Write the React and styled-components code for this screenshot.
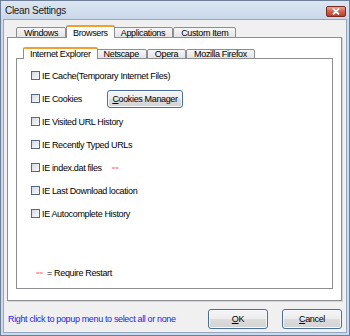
import React from 'react';
import styled, { createGlobalStyle } from 'styled-components';

const GlobalStyle = createGlobalStyle`
  html, body {
    margin: 0;
    padding: 0;
    background: #ffffff;
  }
  body {
    font-family: "Liberation Sans", Arial, sans-serif;
    font-size: 9px;
    letter-spacing: -0.35px;
    color: #000;
  }
`;

const Window = styled.div`
  width: 350px;
  height: 336px;
  box-sizing: border-box;
  display: flex;
  flex-direction: column;
  border: 1px solid #6c7f96;
  background: #cad9eb;
  padding: 0 2px 2px;
`;

const TitleBar = styled.div`
  height: 18px;
  display: flex;
  align-items: center;
  justify-content: space-between;
  background: linear-gradient(#dce6f2, #c9d8ea);
  margin: 0 -2px;
  padding: 0 3px 0 4px;
`;

const Title = styled.span`
  font-size: 10px;
  letter-spacing: -0.3px;
  color: #1a1a1a;
`;

const CloseButton = styled.div`
  width: 20px;
  height: 11px;
  box-sizing: border-box;
  margin-top: 2px;
  border: 1px solid #7a2a22;
  border-radius: 2px;
  background: linear-gradient(#e9a392, #d0614c 50%, #b8402c);
  display: flex;
  align-items: center;
  justify-content: center;
`;

const Body = styled.div`
  flex: 1;
  display: flex;
  flex-direction: column;
  background: #f0f0f0;
  border: 1px solid #93a7c0;
  padding: 4px 4px 3px 3px;
`;

const TabStrip = styled.div`
  display: flex;
  align-items: flex-end;
  padding-left: ${(p) => p.$indent}px;
  height: ${(p) => p.$height}px;
  position: relative;
  z-index: 1;
`;

const Tab = styled.div`
  box-sizing: border-box;
  height: ${(p) => (p.$active ? p.$h + 2 : p.$h)}px;
  padding: 0 ${(p) => (p.$active ? 6 : 7)}px;
  margin: 0 ${(p) => (p.$active ? -2 : 0)}px -1px;
  display: flex;
  align-items: center;
  white-space: nowrap;
  border: 1px solid #8c8e94;
  border-bottom: ${(p) => (p.$active ? 'none' : '1px solid #8c8e94')};
  border-top: ${(p) => (p.$active ? '2px solid #f0a030' : '1px solid #8c8e94')};
  border-radius: 2px 2px 0 0;
  background: ${(p) => (p.$active ? '#ffffff' : 'linear-gradient(#f7f7f7, #e4e4e4)')};
  position: relative;
  z-index: ${(p) => (p.$active ? 2 : 1)};
  & + & {
    margin-left: ${(p) => (p.$active ? -2 : 0)}px;
  }
`;

const Panel = styled.div`
  flex: 1;
  display: flex;
  flex-direction: column;
  background: #ffffff;
  border: 1px solid #8c8e94;
  box-shadow: ${(p) => (p.$outer ? '1px 1px 0 #d6d6d6' : 'none')};
  padding: ${(p) => p.$pad};
`;

const OptionList = styled.div`
  display: flex;
  flex-direction: column;
  padding: 5px 0 0 14px;
`;

const OptionRow = styled.label`
  height: 23px;
  display: flex;
  align-items: center;
  gap: 2px;
  white-space: nowrap;
`;

const CheckBox = styled.span`
  width: 9px;
  height: 9px;
  box-sizing: border-box;
  border: 1px solid #55698a;
  background: linear-gradient(135deg, #d5d9e0, #fafafa);
  flex: none;
`;

const RestartMark = styled.span`
  color: #ff5a5a;
  font-size: 6px;
  font-weight: bold;
  letter-spacing: 0;
  margin-left: ${(p) => p.$gap}px;
  margin-right: ${(p) => p.$after || 0}px;
`;

const Button = styled.button`
  font-family: inherit;
  font-size: 9px;
  letter-spacing: -0.35px;
  color: #000;
  box-sizing: border-box;
  width: ${(p) => p.$width}px;
  height: ${(p) => p.$height}px;
  margin-left: ${(p) => p.$offset || 0}px;
  padding: 0;
  white-space: nowrap;
  border: 1px solid #4a6f98;
  border-radius: 3px;
  background: linear-gradient(#f6f6f6, #ececec 50%, #dcdcdc 51%, #d3d3d3);
  box-shadow: inset 0 0 0 1px #f5f9fd;
  u {
    text-decoration: underline;
  }
`;

const Legend = styled.div`
  margin-top: auto;
  padding: 0 0 9px 19px;
  display: flex;
  align-items: center;
  height: 12px;
`;

const Footer = styled.div`
  display: flex;
  align-items: center;
  padding-top: 8px;
  height: 20px;
`;

const Hint = styled.span`
  color: #2424e6;
  flex: 1;
  padding-left: 1px;
  white-space: nowrap;
`;

const outerTabs = ['Windows', 'Browsers', 'Applications', 'Custom Item'];
const innerTabs = ['Internet Explorer', 'Netscape', 'Opera', 'Mozilla Firefox'];

const options = [
  { label: 'IE Cache(Temporary Internet Files)' },
  { label: 'IE Cookies', button: true },
  { label: 'IE Visited URL History' },
  { label: 'IE Recently Typed URLs' },
  { label: 'IE index.dat files', restart: true },
  { label: 'IE Last Download location' },
  { label: 'IE Autocomplete History' },
];

export default function App() {
  return (
    <>
      <GlobalStyle />
      <Window>
        <TitleBar>
          <Title>Clean Settings</Title>
          <CloseButton>
            <svg width="8" height="7" viewBox="0 0 8 7">
              <path d="M1 0.5 L7 6.5 M7 0.5 L1 6.5" stroke="#ffffff" strokeWidth="1.8" />
            </svg>
          </CloseButton>
        </TitleBar>
        <Body>
          <TabStrip $indent={9} $height={13}>
            {outerTabs.map((t) => (
              <Tab key={t} $h={11} $active={t === 'Browsers'}>{t}</Tab>
            ))}
          </TabStrip>
          <Panel $outer $pad="9px 8px 11px 8px">
            <TabStrip $indent={9} $height={11}>
              {innerTabs.map((t) => (
                <Tab key={t} $h={10} $active={t === 'Internet Explorer'}>{t}</Tab>
              ))}
            </TabStrip>
            <Panel>
              <OptionList>
                {options.map((o) => (
                  <OptionRow key={o.label}>
                    <CheckBox />
                    <span>{o.label}</span>
                    {o.restart && <RestartMark $gap={8}>==</RestartMark>}
                    {o.button && (
                      <Button $width={76} $height={18} $offset={23}>
                        <u>C</u>ookies Manager
                      </Button>
                    )}
                  </OptionRow>
                ))}
              </OptionList>
              <Legend>
                <RestartMark $gap={0} $after={4}>==</RestartMark>
                <span>= Require Restart</span>
              </Legend>
            </Panel>
          </Panel>
          <Footer>
            <Hint>Right click to popup menu to select all or none</Hint>
            <Button $width={60} $height={20}>
              <u>O</u>K
            </Button>
            <Button $width={60} $height={20} $offset={14}>
              <u>C</u>ancel
            </Button>
          </Footer>
        </Body>
      </Window>
    </>
  );
}
